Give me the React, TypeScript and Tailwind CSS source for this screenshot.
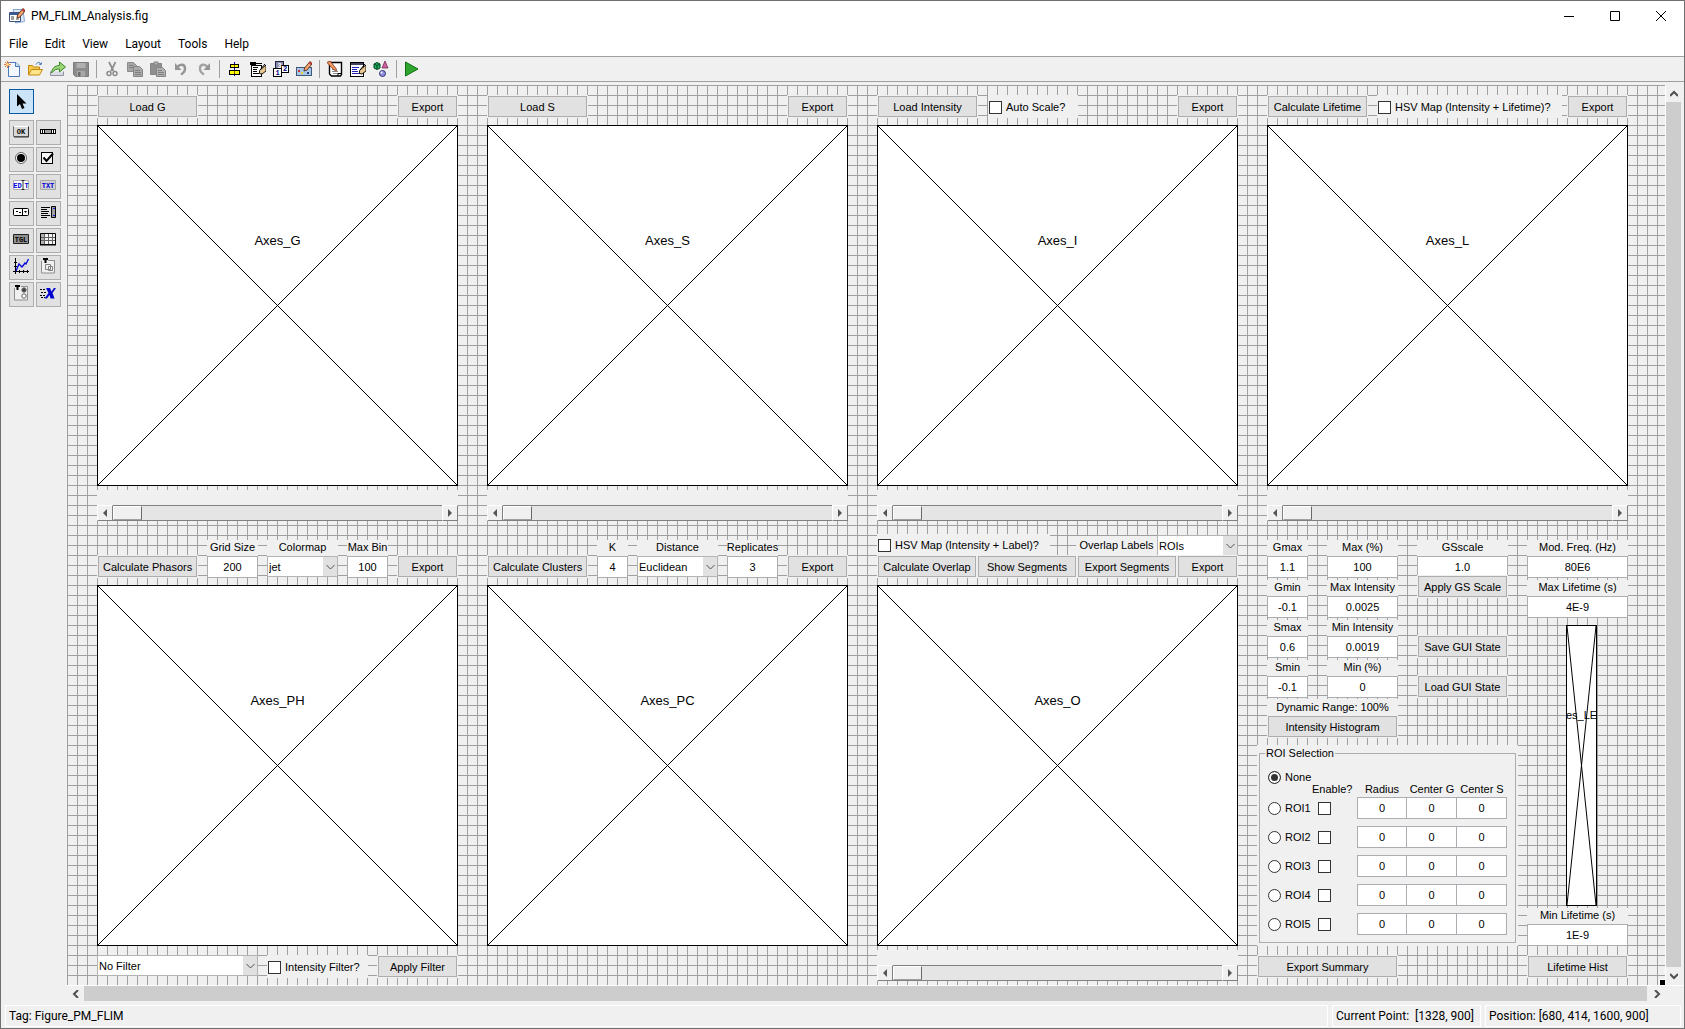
import React from "react";

type Children = { children?: React.ReactNode };

/* ---------- form widgets ---------- */

function PushButton({ children }: Children) {
  return (
    <button className="m-px h-[21px] self-end border border-[#adadad] bg-[#e1e1e1] px-1 pt-[2px] text-center leading-none whitespace-nowrap shadow-[0_0_0_1px_#f0f0f0]">
      {children}
    </button>
  );
}

function Field({ label, value }: { label: string; value: string }) {
  return (
    <label className="flex flex-col self-start text-center">
      <span className="flex h-4 shrink-0 items-center justify-center bg-[#f0f0f0] pb-px leading-none whitespace-nowrap">{label}</span>
      <input
        className="h-[22px] w-full min-w-0 shrink-0 border border-[#abadb3] bg-white pb-px text-center leading-none"
        defaultValue={value}
      />
    </label>
  );
}

function Dropdown({ value, label }: { value: string; label: string }) {
  return (
    <span className="relative flex h-[21px]">
      <select
        aria-label={label}
        className="h-full w-full appearance-none border border-[#b4b4b4] bg-white pt-[2px] pl-px leading-none"
        defaultValue={value}
      >
        <option>{value}</option>
      </select>
      <span className="pointer-events-none absolute top-px right-px bottom-px flex w-[14px] items-center justify-center bg-[#e1e1e1]">
        <svg width="9" height="6" viewBox="0 0 9 6" fill="none" stroke="#505050">
          <path d="M.5 1 4.5 5 8.5 1" />
        </svg>
      </span>
    </span>
  );
}

function LabelledDropdown({ label, value }: { label: string; value: string }) {
  return (
    <div className="flex flex-col text-center">
      <span className="flex h-4 items-center justify-center bg-[#f0f0f0] pb-px leading-none">{label}</span>
      <Dropdown label={label} value={value} />
    </div>
  );
}

const boxClass = "size-[13px] shrink-0 appearance-none border border-[#333] bg-white";

function CheckField({ children, className }: Children & { className: string }) {
  return (
    <label className={"flex items-center gap-1 bg-[#f0f0f0] pt-px pl-px leading-none whitespace-nowrap " + className}>
      <input type="checkbox" className={boxClass} />
      {children}
    </label>
  );
}

function ArrowButton({ dir }: { dir: "left" | "right" }) {
  return (
    <button
      aria-label={dir}
      className="flex h-4 w-4 shrink-0 items-center justify-center border border-t-white border-r-[#808080] border-b-[#808080] border-l-white bg-[#f0f0f0]"
    >
      <svg width="4" height="8" viewBox="0 0 4 8" fill="#555">
        <path d={dir === "left" ? "M4 0v8L0 4z" : "M0 0v8l4-4z"} />
      </svg>
    </button>
  );
}

function Slider({ name }: { name: string }) {
  return (
    <div className="mt-1 flex bg-[#f0f0f0] pt-[15px]">
      <ArrowButton dir="left" />
      <input
        type="range"
        aria-label={name}
        defaultValue={0}
        className="h-4 min-w-0 flex-1 appearance-none border-y border-[#808080] bg-[#e5e5e5] [&::-webkit-slider-thumb]:h-[14px] [&::-webkit-slider-thumb]:w-[29px] [&::-webkit-slider-thumb]:appearance-none [&::-webkit-slider-thumb]:border [&::-webkit-slider-thumb]:border-t-white [&::-webkit-slider-thumb]:border-r-[#696969] [&::-webkit-slider-thumb]:border-b-[#a0a0a0] [&::-webkit-slider-thumb]:border-l-white [&::-webkit-slider-thumb]:bg-[#f0f0f0]"
      />
      <ArrowButton dir="right" />
    </div>
  );
}

function Axes({ name, className }: { name: string; className: string }) {
  return (
    <div className={"relative border border-black bg-white " + className}>
      <svg className="absolute inset-0 h-full w-full" viewBox="0 0 100 100" preserveAspectRatio="none" stroke="#000">
        <path d="M0 0 100 100M0 100 100 0" vectorEffect="non-scaling-stroke" shapeRendering="crispEdges" />
      </svg>
      <div className="absolute inset-x-0 top-[30%] flex justify-center leading-none">
        <span className="shrink-0">{name}</span>
      </div>
    </div>
  );
}

/* ---------- icons ---------- */

function Icon({ children, size = 16 }: Children & { size?: number }) {
  return (
    <svg width={size} height={size} viewBox="0 0 16 16" fill="none" className="shrink-0">
      {children}
    </svg>
  );
}

const pencil = (
  <g>
    <path d="M14 .5 8.500 7 8 10l3-1L16 3z" fill="#f0a878" stroke="#5a2a10" strokeWidth=".9" />
    <path d="M13 2 14.500.5 16 2 14.500 4z" fill="#c03030" />
  </g>
);

const hand = (
  <g>
    <path d="M16 4 9.500 9.500v3l2.500.5 4-3z" fill="#e8c890" stroke="#000" strokeWidth=".9" />
    <path d="M10 9 15 3" stroke="#000" />
  </g>
);

const toolIcons: Record<string, React.ReactNode> = {
  New: (
    <Icon>
      <path d="M4.500 1.500H12L15.500 5v10.500h-11z" fill="#f4f9ff" stroke="#4a78b8" />
      <path d="M11.500 1.500V5.500h4" fill="#cfe0f5" stroke="#4a78b8" />
      <path d="M3.500 0v7M0 3.500h7M1 1l5 5M6 1 1 6" stroke="#e07030" strokeWidth=".9" />
      <circle cx="3.500" cy="3.500" r="1.300" fill="#ffe090" />
    </Icon>
  ),
  Open: (
    <Icon>
      <path d="M9 3.500c2-3 4-2.500 5 0m0 0-2-.5m2 .5.5-2" stroke="#3a70b0" />
      <path d="M1.500 13.500v-9h4l1 1.500h6v2.500" fill="#f7c94a" stroke="#c08a10" />
      <path d="M1.500 14 4.500 8.500H15.500L12.500 14z" fill="#ffe58a" stroke="#c08a10" />
    </Icon>
  ),
  Share: (
    <Icon>
      <path d="M.5 10.500v4h13v-4" fill="#dcdce4" stroke="#9090a0" />
      <path d="M1.500 12C2 7 5 4.500 9.500 4.500V1L15.500 6 9.500 11V8C6 8 4 9 1.500 12z" fill="#9ad478" stroke="#3c8a28" />
    </Icon>
  ),
  Save: (
    <Icon>
      <path d="M.5 1.500h15v14h-13l-2-2z" fill="#8c8c8c" stroke="#7d7d7d" />
      <path d="M3.500 2h9v5h-9z" fill="#b0b0b0" />
      <path d="M4 10h8v5.500H4z" fill="#a8a8a8" />
      <path d="M5 11h2.500v4.500H5z" fill="#6e6e6e" />
    </Icon>
  ),
  Cut: (
    <Icon>
      <path d="M5 1l4.500 9M11.500 1 7 10" stroke="#8c8c8c" strokeWidth="1.700" />
      <circle cx="5" cy="12.500" r="2" stroke="#8c8c8c" strokeWidth="1.500" />
      <circle cx="11" cy="12.500" r="2" stroke="#8c8c8c" strokeWidth="1.500" />
    </Icon>
  ),
  Copy: (
    <Icon>
      <path d="M.5 1.500h6l3 3v6h-9z" fill="#a6a6a6" stroke="#8c8c8c" />
      <path d="M6.500 5.500h6l3 3v7h-9z" fill="#ababab" stroke="#858585" />
      <path d="M2 4.500h4M2 6.500h4M8 9.500h5M8 11.500h6M8 13.500h6" stroke="#808080" />
    </Icon>
  ),
  Paste: (
    <Icon>
      <path d="M.5 2.500h11v11H.5z" fill="#8f8f8f" stroke="#858585" />
      <path d="M4 1h4v3H4z" fill="#b0b0b0" stroke="#858585" />
      <path d="M6.500 6.500h6l3 3v6h-9z" fill="#b0b0b0" stroke="#858585" />
      <path d="M8 9.500h4M8 11.500h6M8 13.500h6" stroke="#808080" />
    </Icon>
  ),
  Undo: (
    <Icon>
      <path d="M4.500 6C7 2.500 12 3 12 7.500c0 2.500-1.500 4.500-4 6" stroke="#959595" strokeWidth="2.400" />
      <path d="M2 2v7h6.500z" fill="#959595" />
    </Icon>
  ),
  Redo: (
    <Icon>
      <path d="M11.500 6C9 2.500 4 3 4 7.500c0 2.500 1.500 4.500 4 6" stroke="#a3a3a3" strokeWidth="2.400" />
      <path d="M14 2v7H7.500z" fill="#959595" />
    </Icon>
  ),
  "Align Objects": (
    <Icon>
      <path d="M7.500 1v14" stroke="#0000a0" shapeRendering="crispEdges" />
      <path d="M3.500 3.500h8v3h-8zM2.500 9.500h10v4h-10z" fill="#ffff00" stroke="#000" shapeRendering="crispEdges" />
      <path d="M7.500 4v2M7.500 10v3" stroke="#806000" shapeRendering="crispEdges" />
    </Icon>
  ),
  "Menu Editor": (
    <Icon>
      <path d="M1.500 4.500h10v11h-10z" fill="#fff" stroke="#000" shapeRendering="crispEdges" />
      <path d="M0 1h6v3H0z" fill="#000" />
      <path d="M6 2.500h6" stroke="#000" />
      <path d="M3 6.500h5M3 8.500h4M3 10.500h4M3 12.500h6" stroke="#000" shapeRendering="crispEdges" />
      {hand}
    </Icon>
  ),
  "Tab Order Editor": (
    <Icon>
      <path d="M2.500.5h8v7h-8z" fill="#8888a8" stroke="#202040" shapeRendering="crispEdges" />
      <path d="M.5 7.500h8v8h-8zM8.500 4.500h7v7h-7z" fill="#fff" stroke="#000" shapeRendering="crispEdges" />
      <g fill="#000080" fontFamily="Liberation Mono" fontWeight="700" fontSize="7">
        <text x="4.500" y="6.500" fill="#fff">3</text>
        <text x="2.500" y="14">1</text>
        <text x="10" y="10">2</text>
      </g>
    </Icon>
  ),
  "Toolbar Editor": (
    <Icon>
      <path d="M.5 6.500h15v8H.5z" fill="#a8c8e8" stroke="#405878" shapeRendering="crispEdges" />
      <path d="M1 14h14v1H1z" fill="#405878" />
      <path d="M2 9h2v2H2z" fill="#d03030" />
      <path d="M5 11h2v2H5z" fill="#f0d030" />
      <path d="M11 11h2v2h-2z" fill="#204080" />
      {pencil}
    </Icon>
  ),
  "M-file Editor": (
    <Icon>
      <path d="M2.500 1.500h12v12l-1 1.500H4.500l-2-2z" fill="#fff" stroke="#000" strokeWidth="1.400" />
      <path d="M5 8.500h4M5 10.500h6M6 12.500h6" stroke="#888" />
      <path d="M0 1.500 7 9l2.500.5-.5-2L3 0z" fill="#f0a060" stroke="#802010" strokeWidth=".8" />
      <path d="M11 15v-2.500h3" stroke="#000" />
    </Icon>
  ),
  "Property Inspector": (
    <Icon>
      <path d="M.5 1.500h13v14H.5z" fill="#fff" stroke="#000" shapeRendering="crispEdges" />
      <path d="M1 2h12v2H1z" fill="#404060" />
      <path d="M2 6.500h7M2 8.500h5M2 10.500h6M2 12.500h8" stroke="#2020c0" shapeRendering="crispEdges" />
      {hand}
    </Icon>
  ),
  "Object Browser": (
    <Icon>
      <path d="M1 3l3-1.500L7 3v4L4 8.500 1 7z" fill="#20b060" stroke="#004020" />
      <path d="M1 3l3 1.500L7 3M4 4.500V8" stroke="#004020" />
      <path d="M12 0 9 7h6z" fill="#d060a0" stroke="#602040" strokeWidth=".7" />
      <circle cx="9.500" cy="12.500" r="3" fill="#9090e0" stroke="#303070" />
      <circle cx="8.500" cy="11.500" r="1" fill="#fff" />
    </Icon>
  ),
  Run: (
    <Icon>
      <path d="M1.500 1v14L14 8z" fill="#2fa52f" stroke="#107010" />
    </Icon>
  ),
};

const toolGroups = [
  ["New", "Open", "Share", "Save"],
  ["Cut", "Copy", "Paste", "Undo", "Redo"],
  ["Align Objects", "Menu Editor", "Tab Order Editor", "Toolbar Editor"],
  ["M-file Editor", "Property Inspector", "Object Browser"],
  ["Run"],
];

const glyph = { fontFamily: "Liberation Mono", fontWeight: 700, fontSize: 7, textAnchor: "middle" as const };

const paletteIcons: Record<string, React.ReactNode> = {
  "Push Button": (
    <>
      <path d="M.5 3.500h15v10H.5z" fill="#d8d8d8" stroke="#707070" />
      <path d="M1 3.500h14" stroke="#fff" />
      <path d="M15.500 4v10H1" stroke="#333" />
      <text x="8" y="11" fill="#000" {...glyph}>OK</text>
    </>
  ),
  Slider: (
    <>
      <path d="M0 6h16v5H0z" fill="#000" />
      <path d="M1 7h1v3H1zM3 7h1v3H3zM12 7h1v3h-1zM14 7h1v3h-1z" fill="#fff" />
      <path d="M5 7h6v3H5z" fill="#a0a0a0" />
    </>
  ),
  "Radio Button": (
    <>
      <circle cx="8" cy="8" r="5.500" fill="#fff" stroke="#606060" />
      <circle cx="8" cy="8" r="4" fill="#000" />
    </>
  ),
  "Check Box": (
    <>
      <path d="M1.500 2.500h11v11h-11z" fill="#f4f4f4" stroke="#000" shapeRendering="crispEdges" />
      <path d="M3.500 7.500 6.500 11 13 3.500" stroke="#000" strokeWidth="2" />
    </>
  ),
  "Edit Text": (
    <>
      <path d="M.5 3.500h15v9H.5z" fill="#fff" stroke="#b0b0b0" />
      <g fill="#0000d8" {...glyph}>
        <text x="4.500" y="10.500">ED</text>
        <text x="13.500" y="10.500">T</text>
      </g>
      <path d="M8.500 3.500h3M8.500 12.500h3M10 4v8" stroke="#000" strokeWidth=".8" />
    </>
  ),
  "Static Text": (
    <>
      <path d="M.5 3.500h15v9H.5z" fill="#d0d0d0" stroke="#a8a8a8" />
      <text x="8" y="10.500" fill="#0000d8" {...glyph}>TXT</text>
    </>
  ),
  "Pop-up Menu": (
    <>
      <rect x=".5" y="4.500" width="15" height="7" rx="1" fill="#fff" stroke="#000" />
      <path d="M9.500 5v6" stroke="#000" />
      <path d="M3 7h2v1H3zM6 8h2v1H6zM11 7h3l-1.500 2z" fill="#000" />
    </>
  ),
  Listbox: (
    <>
      <path d="M1 3.500h9M1 5.500h6M1 7.500h8M1 9.500h7M1 11.500h9M1 13.500h6" stroke="#000" shapeRendering="crispEdges" />
      <path d="M11.500 2.500h4v11h-4z" fill="#a0a0a0" stroke="#000" />
      <path d="M13 4h2v1h-2zM13 11h2v1h-2z" fill="#2020d0" />
    </>
  ),
  "Toggle Button": (
    <>
      <path d="M.5 3.500h15v9H.5z" fill="#909090" stroke="#202020" />
      <text x="8" y="10.500" fill="#000" {...glyph}>TGL</text>
    </>
  ),
  Table: (
    <>
      <path d="M.5 2.500h15v11H.5z" fill="#f4f4f4" stroke="#000" />
      <path d="M1 3h3v10H1z" fill="#b0b0b0" />
      <path d="M4.500 3v10M8.500 3v10M12.500 3v10M1 6.500h14M1 9.500h14" stroke="#606060" />
      <path d="M0 13h16v1.500H0z" fill="#000" />
    </>
  ),
  Axes: (
    <>
      <path d="M6.500 1v12M11.500 1v12M3 4.500h12M3 8.500h12" stroke="#d8d8d8" />
      <path d="M2.500 0v16M0 13.500h16M1 4.500h3M1 8.500h3M6.500 12v3M10.500 12v3M14.500 12v3" stroke="#000" />
      <path d="M3 13 6 6l3 3 3-4 1 1 2.500-5" stroke="#0000d8" strokeWidth="1.300" />
    </>
  ),
  Panel: (
    <>
      <path d="M1.500 3v12h13V3" fill="#f0f0f0" stroke="#909090" />
      <path d="M8 2.500h7" stroke="#909090" />
      <path d="M5.500 6.500h5v5h-5zM8.500 8.500h4v4h-4z" stroke="#808080" />
      <path d="M3 0h5v2H6.500v3h-2V2H3z" fill="#000" />
    </>
  ),
  "Button Group": (
    <>
      <path d="M1.500 3v12h13V1.500H8" fill="#f0f0f0" stroke="#909090" />
      <circle cx="11" cy="5" r="2.200" fill="#404040" stroke="#707070" />
      <circle cx="11" cy="11" r="2.200" fill="#fff" stroke="#606060" />
      <path d="M2 0h5v2H5.500v3h-2V2H2z" fill="#000" />
    </>
  ),
  "ActiveX Control": (
    <>
      <path d="M0 4.500h5M1 7.500h5M0 10.500h5M1 12.500h4" stroke="#000" strokeDasharray="2 1" />
      <path d="M6 3h4l1.500 3.500L14 3h2l-3.500 5 2 5.500h-4L9.500 10 7 13.500H4.500L8.500 8z" fill="#0000d0" />
    </>
  ),
};

/* ---------- window sections ---------- */

function TitleBar() {
  return (
    <header className="flex h-[29px] shrink-0 items-center gap-[6px] bg-white pl-2 font-[Roboto,sans-serif] text-[12px]">
      <Icon>
        <path d="M4 1.500h10l1.500 12-9 1.500z" fill="#dceafa" stroke="#88a8d0" />
        <path d="M.5 4.500h11v9H.5z" fill="#fff" stroke="#405080" />
        <path d="M1 5h10v2H1z" fill="#3a5a98" />
        <path d="M2 9h3M2 11h3M7 11h3" stroke="#404040" />
        {pencil}
      </Icon>
      <h1 className="flex-1 pt-px leading-none">PM_FLIM_Analysis.fig</h1>
      <div className="flex gap-[26px] pr-[13px]">
        <button aria-label="Minimize" className="flex size-5 items-center justify-center">
          <svg width="10" height="10" stroke="#000" shapeRendering="crispEdges"><path d="M0 5.500h10" /></svg>
        </button>
        <button aria-label="Maximize" className="flex size-5 items-center justify-center">
          <svg width="10" height="10" stroke="#000" fill="none"><path d="M.5.5h9v9h-9z" /></svg>
        </button>
        <button aria-label="Close" className="flex size-5 items-center justify-center">
          <svg width="10" height="10" stroke="#000"><path d="M0 0l10 10M10 0 0 10" /></svg>
        </button>
      </div>
    </header>
  );
}

function MenuBar() {
  return (
    <nav className="flex h-[26px] shrink-0 items-center gap-[17px] bg-white pt-px pl-2 font-[Roboto,sans-serif] text-[12px] leading-none">
      {["File", "Edit", "View", "Layout", "Tools", "Help"].map((m) => (
        <button key={m}>{m}</button>
      ))}
    </nav>
  );
}

function ToolBar() {
  return (
    <div role="toolbar" className="flex h-[26px] shrink-0 items-center gap-[7px] border-t border-b border-[#a0a0a0] bg-[#f0f0f0] pl-[3px]">
      {toolGroups.map((group, i) => (
        <React.Fragment key={i}>
          {i > 0 && <span className="h-[18px] w-px bg-[#a0a0a0]" />}
          {group.map((name) => (
            <button key={name} aria-label={name}>
              {toolIcons[name]}
            </button>
          ))}
        </React.Fragment>
      ))}
    </div>
  );
}

function Palette() {
  return (
    <aside className="w-[66px] shrink-0 pt-[7px] pl-2">
      <button aria-label="Select" className="flex size-[25px] items-center justify-center border border-[#0a58a0] bg-[#cce4f7]">
        <svg width="12" height="16" viewBox="0 0 12 16">
          <path d="M1 0v12.500l3-2.500 2 5 2.500-1-2-4.500h4z" fill="#000" />
        </svg>
      </button>
      <div className="mt-[6px] grid w-[52px] grid-cols-2 gap-[2px]">
        {Object.entries(paletteIcons).map(([name, icon]) => (
          <button key={name} aria-label={name} className="flex size-[25px] items-start border border-[#adadad] bg-[#e1e1e1] pt-[2px] pl-[3px]">
            <Icon>{icon}</Icon>
          </button>
        ))}
      </div>
    </aside>
  );
}

function TopRow() {
  return (
    <div className="grid grid-cols-4 gap-x-[29px]">
      <section>
        <div className="mb-[7px] grid h-[23px] grid-cols-[101px_61px] justify-between">
          <PushButton>Load G</PushButton>
          <PushButton>Export</PushButton>
        </div>
        <Axes name="Axes_G" className="aspect-square text-[13px]" />
        <Slider name="G slider" />
      </section>
      <section>
        <div className="mb-[7px] grid h-[23px] grid-cols-[101px_61px] justify-between">
          <PushButton>Load S</PushButton>
          <PushButton>Export</PushButton>
        </div>
        <Axes name="Axes_S" className="aspect-square text-[13px]" />
        <Slider name="S slider" />
      </section>
      <section>
        <div className="mb-[7px] grid h-[23px] grid-cols-[101px_1fr_61px]">
          <PushButton>Load Intensity</PushButton>
          <CheckField className="ml-[10px] w-[90px]">Auto Scale?</CheckField>
          <PushButton>Export</PushButton>
        </div>
        <Axes name="Axes_I" className="aspect-square text-[13px]" />
        <Slider name="Intensity slider" />
      </section>
      <section>
        <div className="mb-[7px] grid h-[23px] grid-cols-[101px_1fr_61px]">
          <PushButton>Calculate Lifetime</PushButton>
          <CheckField className="mr-[5px] ml-[9px]">HSV Map (Intensity + Lifetime)?</CheckField>
          <PushButton>Export</PushButton>
        </div>
        <Axes name="Axes_L" className="aspect-square text-[13px]" />
        <Slider name="Lifetime slider" />
      </section>
    </div>
  );
}

const roiCols = "grid grid-cols-[44px_45px_50px_50px_50px] pl-2 leading-none";

function RoiPanel() {
  return (
    <div className="-mx-[10px] mt-[7px] h-[201px] bg-[#f0f0f0] px-[2px] pt-[2px]">
      <fieldset className="h-[196px] border border-[#adadad]">
        <legend className="ml-[5px] h-3 px-px leading-3">ROI Selection</legend>
        <label className="mt-[11px] flex h-[14px] items-center gap-1 pl-2 leading-none">
          <input type="radio" name="roi" defaultChecked className="size-[13px] appearance-none rounded-full border border-[#333] bg-white checked:bg-[#333] checked:shadow-[inset_0_0_0_2px_white]" />
          None
        </label>
        <div className={roiCols + " h-[13px]"}>
          <span className="col-start-2">Enable?</span>
          <span className="text-center">Radius</span>
          <span className="text-center">Center G</span>
          <span className="text-center">Center S</span>
        </div>
        <div className="flex flex-col gap-[7px]">
          {[1, 2, 3, 4, 5].map((n) => (
            <div key={n} className={roiCols + " items-center"}>
              <label className="flex items-center gap-1">
                <input type="radio" name="roi" className="size-[13px] shrink-0 appearance-none rounded-full border border-[#333] bg-white checked:bg-[#333] checked:shadow-[inset_0_0_0_2px_white]" />
                ROI{n}
              </label>
              <input type="checkbox" aria-label={"Enable ROI" + n} className={boxClass + " ml-[6px]"} />
              <input aria-label={"Radius " + n} defaultValue="0" className="h-[22px] w-full min-w-0 border border-[#abadb3] bg-white text-center" />
              <input aria-label={"Center G " + n} defaultValue="0" className="h-[22px] w-full min-w-0 border-y border-r border-[#abadb3] bg-white text-center" />
              <input aria-label={"Center S " + n} defaultValue="0" className="h-[22px] w-full min-w-0 border-y border-r border-[#abadb3] bg-white text-center" />
            </div>
          ))}
        </div>
      </fieldset>
    </div>
  );
}

function SettingsColumn() {
  return (
    <section className="pt-[6px]">
      <div className="flex gap-[19px]">
        <div className="min-w-0 flex-1">
          <div className="grid grid-cols-[41px_71px_91px] justify-between">
            <div className="grid gap-[2px]">
              <Field label="Gmax" value="1.1" />
              <Field label="Gmin" value="-0.1" />
              <Field label="Smax" value="0.6" />
              <Field label="Smin" value="-0.1" />
            </div>
            <div className="grid gap-[2px]">
              <Field label="Max (%)" value="100" />
              <Field label="Max Intensity" value="0.0025" />
              <Field label="Min Intensity" value="0.0019" />
              <Field label="Min (%)" value="0" />
            </div>
            <div className="grid grid-rows-[35px_23px_60px_40px] content-start">
              <Field label="GSscale" value="1.0" />
              <div className="z-10 grid"><PushButton>Apply GS Scale</PushButton></div>
              <div className="grid"><PushButton>Save GUI State</PushButton></div>
              <div className="grid"><PushButton>Load GUI State</PushButton></div>
            </div>
          </div>
          <div className="mt-px grid w-[131px]">
            <span className="flex h-4 items-center justify-center bg-[#f0f0f0] leading-none">Dynamic Range: 100%</span>
            <PushButton>Intensity Histogram</PushButton>
          </div>
          <RoiPanel />
        </div>
        <div className="flex w-[101px] flex-col">
          <div className="grid gap-[2px]">
            <Field label="Mod. Freq. (Hz)" value="80E6" />
            <Field label="Max Lifetime (s)" value="4E-9" />
          </div>
          <div className="mt-[7px] mb-[2px] flex flex-1 justify-center pl-[8px]">
            <Axes name="es_LE" className="w-[31px] text-[11px]" />
          </div>
          <div className="grid">
            <Field label="Min Lifetime (s)" value="1E-9" />
          </div>
        </div>
      </div>
      <div className="mt-[9px] -ml-[10px] grid grid-cols-[141px_101px] justify-between">
        <PushButton>Export Summary</PushButton>
        <PushButton>Lifetime Hist</PushButton>
      </div>
    </section>
  );
}

function BottomRow() {
  return (
    <div className="mt-[13px] grid grid-cols-4 gap-x-[29px]">
      <section>
        <div className="mb-[7px] grid h-11 grid-cols-[101px_51px_71px_41px_61px] content-end justify-between">
          <PushButton>Calculate Phasors</PushButton>
          <Field label="Grid Size" value="200" />
          <LabelledDropdown label="Colormap" value="jet" />
          <Field label="Max Bin" value="100" />
          <PushButton>Export</PushButton>
        </div>
        <Axes name="Axes_PH" className="aspect-square text-[13px]" />
        <div className="mt-[9px] grid h-[23px] grid-cols-[161px_101px_81px] justify-between">
          <Dropdown label="Filter" value="No Filter" />
          <CheckField className="">Intensity Filter?</CheckField>
          <PushButton>Apply Filter</PushButton>
        </div>
      </section>
      <section>
        <div className="mb-[7px] grid h-11 grid-cols-[101px_31px_81px_51px_61px] content-end justify-between">
          <PushButton>Calculate Clusters</PushButton>
          <Field label="K" value="4" />
          <LabelledDropdown label="Distance" value="Euclidean" />
          <Field label="Replicates" value="3" />
          <PushButton>Export</PushButton>
        </div>
        <Axes name="Axes_PC" className="aspect-square text-[13px]" />
      </section>
      <section>
        <div className="mb-[7px] h-11">
          <div className="flex h-[21px]">
            <CheckField className="w-[173px] pt-[3px]">HSV Map (Intensity + Label)?</CheckField>
            <span className="mt-[2px] ml-auto flex w-[81px] items-center justify-center bg-[#f0f0f0] pb-px leading-none">Overlap Labels</span>
            <div className="w-[81px] pt-px"><Dropdown label="Overlap Labels" value="ROIs" /></div>
          </div>
          <div className="relative grid h-[23px] grid-cols-[100fr_100fr_100fr_61fr]">
            <PushButton>Calculate Overlap</PushButton>
            <PushButton>Show Segments</PushButton>
            <PushButton>Export Segments</PushButton>
            <PushButton>Export</PushButton>
          </div>
        </div>
        <Axes name="Axes_O" className="aspect-square text-[13px]" />
        <Slider name="Overlap slider" />
      </section>
      <SettingsColumn />
    </div>
  );
}

function Chevron({ d }: { d: string }) {
  return (
    <svg width="8" height="8" viewBox="0 0 8 8" fill="none" stroke="#505050" strokeWidth="2">
      <path d={d} />
    </svg>
  );
}

function Workspace() {
  return (
    <div className="flex min-h-0 flex-1">
      <Palette />
      <div className="flex min-w-0 flex-1 flex-col pt-[3px]">
        <div className="flex min-h-0 flex-1">
          <main className="relative min-w-0 flex-1 overflow-hidden bg-[#f0f0f0] bg-[linear-gradient(#a0a0a0_1px,transparent_1px),linear-gradient(90deg,#a0a0a0_1px,transparent_1px)] bg-[size:10px_10px] pt-[10px] pr-[37px] pl-[30px] font-['Liberation_Sans',Arial,sans-serif] text-[11px]">
            <TopRow />
            <BottomRow />
            <span className="absolute right-0 bottom-0 size-[6px] border-t border-l border-white bg-black" />
          </main>
          <div className="flex w-[19px] shrink-0 flex-col items-center border-l border-white pr-[3px]">
            <button aria-label="Scroll up" className="flex h-[17px] items-center"><Chevron d="M0 6l4-4 4 4" /></button>
            <div className="w-[15px] flex-1 bg-[#cdcdcd]" />
            <button aria-label="Scroll down" className="flex h-[18px] items-center"><Chevron d="M0 2l4 4 4-4" /></button>
          </div>
        </div>
        <div className="flex h-[16px] shrink-0 border-t border-white pr-[18px]">
          <button aria-label="Scroll left" className="flex w-[17px] items-center justify-center"><Chevron d="M6 0 2 4l4 4" /></button>
          <div className="flex-1 bg-[#cdcdcd]" />
          <button aria-label="Scroll right" className="flex w-[19px] items-center justify-center"><Chevron d="M2 0l4 4-4 4" /></button>
        </div>
      </div>
    </div>
  );
}

function StatusBar() {
  return (
    <footer className="mt-1 mb-px flex h-[22px] shrink-0 gap-1 pr-[3px] pl-1 font-[Roboto,sans-serif] text-[12px] leading-none whitespace-pre">
      <div className="flex flex-1 items-center border border-white px-[3px]">Tag: Figure_PM_FLIM</div>
      <div className="flex w-[149px] items-center border border-white px-[3px]">{"Current Point:  [1328, 900]"}</div>
      <div className="flex w-[196px] items-center border border-white px-[3px]">Position: [680, 414, 1600, 900]</div>
    </footer>
  );
}

export default function App() {
  return (
    <div className="flex h-screen flex-col border border-[#707070] bg-[#f0f0f0] text-black">
      <TitleBar />
      <MenuBar />
      <ToolBar />
      <Workspace />
      <StatusBar />
    </div>
  );
}
